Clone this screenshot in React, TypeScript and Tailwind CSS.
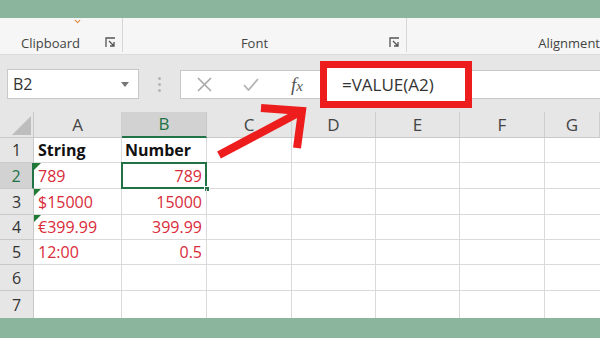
import { ChevronDown } from 'lucide-react'

const cols = [
  { id: 'A', w: 'w-[88px]' },
  { id: 'B', w: 'w-[85px]' },
  { id: 'C', w: 'w-[85px]' },
  { id: 'D', w: 'w-[84px]' },
  { id: 'E', w: 'w-[84px]' },
  { id: 'F', w: 'w-[85px]' },
  { id: 'G', w: 'flex-1' },
]

const rows = [
  { n: 1, h: 'h-[25px]', a: 'String', b: 'Number', bold: true },
  { n: 2, h: 'h-[26px]', a: '789', b: '789', flag: true },
  { n: 3, h: 'h-[26px]', a: '$15000', b: '15000', flag: true },
  { n: 4, h: 'h-[25px]', a: '€399.99', b: '399.99', flag: true },
  { n: 5, h: 'h-[25px]', a: '12:00', b: '0.5' },
  { n: 6, h: 'h-[26px]', a: '', b: '' },
  { n: 7, h: 'h-[28px]', a: '', b: '' },
]

function Launcher() {
  return (
    <svg width="11" height="11" viewBox="0 0 11 11" className="text-[#555]">
      <path d="M1 10V1h9" fill="none" stroke="currentColor" strokeWidth="1.3" />
      <path d="M4 4l5 5M9 5v4H5" fill="none" stroke="currentColor" strokeWidth="1.3" />
    </svg>
  )
}

export default function App() {
  return (
    <div
      className="relative w-[600px] h-[338px] overflow-hidden bg-[#e7e7e7] flex flex-col"
      style={{ fontFamily: '"Open Sans", "Noto Sans", Arial, sans-serif' }}
    >
      {/* top band */}
      <div className="h-[18px] bg-[#8bb59c] shrink-0" />

      {/* ribbon group labels */}
      <div className="h-[37px] shrink-0 flex bg-[#f6f6f6] border-b border-[#dcdcdc] text-[13px] text-[#444] shadow-[0_2px_3px_rgba(0,0,0,0.06)]">
        <div className="relative w-[124px] border-r border-[#d6d6d6] mb-[2px] flex items-end">
          <ChevronDown size={9} strokeWidth={3} className="absolute left-[73px] top-[-1px] text-[#e08a3a]" />
          <span className="ml-[21px] -mb-[1px]">Clipboard</span>
          <span className="ml-auto mr-[6px] mb-[4px]"><Launcher /></span>
        </div>
        <div className="w-[287px] border-r border-[#d6d6d6] mb-[2px] flex items-end">
          <span className="ml-[118px] -mb-[1px]">Font</span>
          <span className="ml-auto mr-[6px] mb-[4px]"><Launcher /></span>
        </div>
        <div className="flex-1 flex items-end pb-[1px]">
          <span className="ml-[131px]">Alignment</span>
        </div>
      </div>

      {/* formula bar */}
      <div className="h-[57px] shrink-0 flex items-start pt-[14px] bg-[#e6e6e6]">
        <div className="ml-[7px] w-[132px] h-[30px] bg-white border border-[#c8c8c8] flex items-center text-[16px] text-[#333]">
          <span className="ml-[5px]">B2</span>
          <svg width="8" height="5" viewBox="0 0 8 5" className="ml-auto mr-[9px]">
            <path d="M0 0h8L4 5z" fill="#777" />
          </svg>
        </div>
        <div className="w-[41px] h-[30px] flex flex-col items-center justify-center gap-[3px]">
          <span className="w-[3px] h-[3px] rounded-full bg-[#b5b5b5]" />
          <span className="w-[3px] h-[3px] rounded-full bg-[#b5b5b5]" />
          <span className="w-[3px] h-[3px] rounded-full bg-[#b5b5b5]" />
        </div>
        <div className="flex-1 h-[29px] mt-[1px] bg-white border-y border-l border-[#c8c8c8] flex items-center">
          <div className="w-[47px] flex justify-center">
            <svg width="15" height="15" viewBox="0 0 15 15">
              <path d="M1 1l13 13M14 1L1 14" stroke="#a8a8a8" strokeWidth="1.6" />
            </svg>
          </div>
          <div className="w-[46px] flex justify-center">
            <svg width="16" height="13" viewBox="0 0 16 13">
              <path d="M1 7l4.5 5L15 1" fill="none" stroke="#b3b3b3" strokeWidth="1.8" />
            </svg>
          </div>
          <div
            className="w-[46px] flex justify-center items-baseline italic text-[#555] leading-none"
            style={{ fontFamily: '"Liberation Serif", "DejaVu Serif", serif' }}
          >
            <span className="text-[19px]">f</span>
            <span className="text-[15px]">x</span>
          </div>
          <div className="-my-[10px] h-[47px] w-[152px] bg-white border-[7px] border-[#ee1d1d] flex items-center pl-[15px] text-[17px] text-[#333]">
            =VALUE(A2)
          </div>
        </div>
      </div>

      {/* column headers */}
      <div className="h-[26px] shrink-0 flex bg-[#e6e6e6] border-b border-[#c9c9c9] text-[17px] text-[#444]">
        <div className="w-[34px] flex items-end justify-end pr-[2px] pb-[2px] border-r border-[#c9c9c9]">
          <svg width="19" height="19" viewBox="0 0 19 19">
            <path d="M19 0V19H0z" fill="#bdbdbd" />
          </svg>
        </div>
        {cols.map((c) => (
          <div
            key={c.id}
            className={
              c.id === 'B'
                ? `${c.w} flex items-center justify-center bg-[#d2d2d2] text-[#217346] border-r border-[#c9c9c9] border-b-2 border-b-[#217346] -mb-[1px]`
                : `${c.w} flex items-center justify-center border-r border-[#cfcfcf]`
            }
          >
            {c.id}
          </div>
        ))}
      </div>

      {/* grid */}
      <div className="h-[180px] shrink-0 overflow-hidden bg-white text-[16px]">
        {rows.map((r) => (
          <div key={r.n} className={`${r.h} flex`}>
            <div
              className={
                r.n === 2
                  ? 'w-[34px] flex items-center justify-center bg-[#d2d2d2] text-[#217346] border-r-2 border-[#217346] border-b border-b-[#c9c9c9]'
                  : 'w-[34px] flex items-center justify-center bg-[#e6e6e6] text-[#333] border-r border-[#c9c9c9] border-b border-b-[#c9c9c9]'
              }
            >
              {r.n}
            </div>
            <div
              className={`relative w-[88px] flex items-center pl-[4px] border-r border-b border-[#dadada] ${
                r.bold ? 'font-bold text-[#111]' : 'text-[#d92b3a]'
              }`}
            >
              {r.flag && (
                <svg width="7" height="7" viewBox="0 0 7 7" className="absolute left-0 top-0">
                  <path d="M0 0h7L0 7z" fill="#1f7a33" />
                </svg>
              )}
              {r.a}
            </div>
            <div
              className={`relative w-[85px] flex items-center border-r border-b border-[#dadada] ${
                r.bold ? 'font-bold text-[#111] pl-[3px]' : 'justify-end pr-[4px] text-[#d92b3a]'
              }`}
            >
              {r.n === 2 && (
                <>
                  <div className="absolute -left-[1px] -top-[1px] -right-[1px] -bottom-[1px] border-2 border-[#217346]" />
                  <div className="absolute -right-[4px] -bottom-[4px] w-[6px] h-[6px] bg-[#217346] border border-white" />
                </>
              )}
              {r.b}
            </div>
            <div className="w-[85px] border-r border-b border-[#dadada]" />
            <div className="w-[84px] border-r border-b border-[#dadada]" />
            <div className="w-[84px] border-r border-b border-[#dadada]" />
            <div className="w-[85px] border-r border-b border-[#dadada]" />
            <div className="flex-1 border-b border-[#dadada]" />
          </div>
        ))}
      </div>

      {/* bottom band */}
      <div className="flex-1 bg-[#8bb59c]" />

      {/* red arrow pointing at the formula */}
      <svg className="absolute left-0 top-0 pointer-events-none" width="600" height="338" viewBox="0 0 600 338">
        <path d="M219 155L300 112" stroke="#ee1d1d" strokeWidth="8" />
        <path d="M261 108L302 111L297 148" fill="none" stroke="#ee1d1d" strokeWidth="8" strokeLinejoin="miter" />
      </svg>
    </div>
  )
}
